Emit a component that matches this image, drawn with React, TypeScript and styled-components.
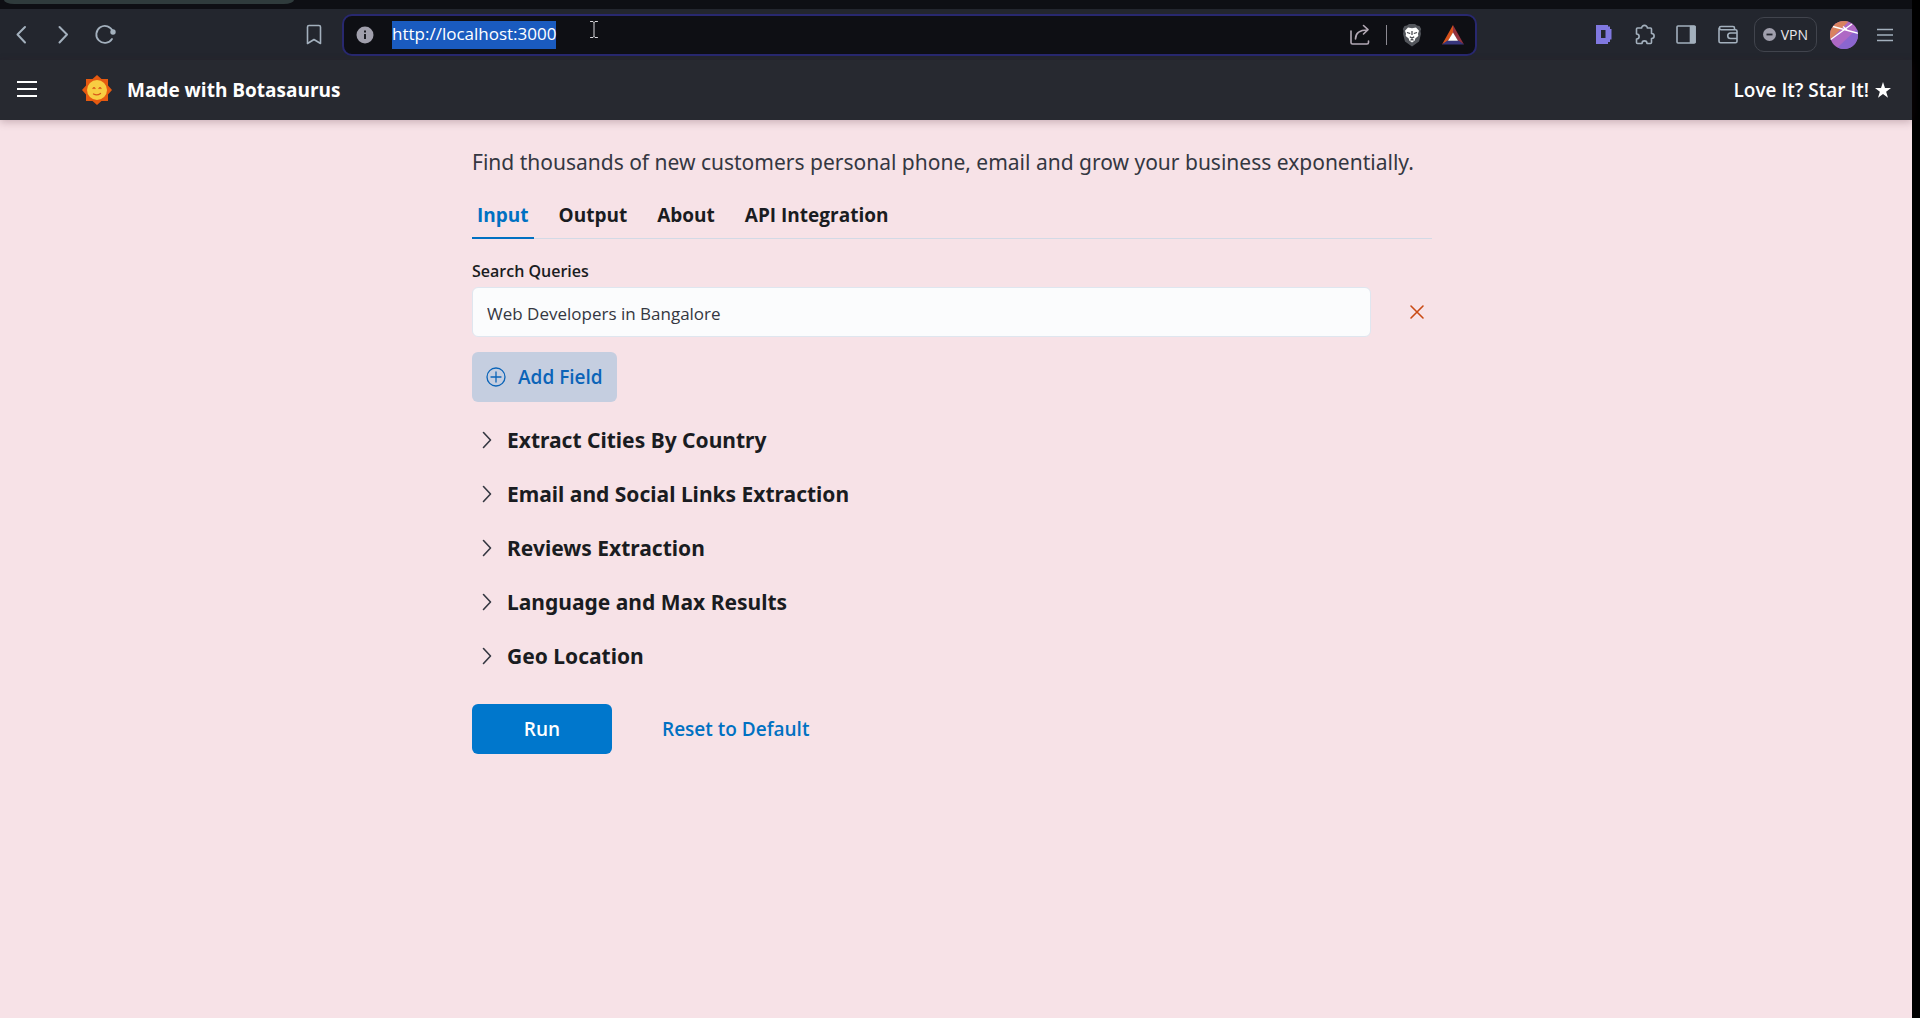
import React, { useState } from "react";
import styled, { createGlobalStyle } from "styled-components";

const uiFont = '"Open Sans", "Noto Sans", sans-serif';
const displayFont = '"Noto Sans", "Open Sans", sans-serif';

const GlobalStyle = createGlobalStyle`
  * { box-sizing: border-box; }
  body { margin: 0; background: #000; font-family: ${uiFont}; }
  button, input { font-family: inherit; }
  button { border: 0; background: none; padding: 0; margin: 0; cursor: pointer; }
`;

const Window = styled.div`
  display: flex;
  flex-direction: column;
  min-height: 100vh;
  margin-right: 8px;
  background: #f7e2e7;
`;

const TabStrip = styled.div`
  height: 9px;
  padding-left: 4px;
  background: #0e0f14;
`;

const TabEdge = styled.div`
  width: 290px;
  height: 4px;
  border-radius: 0 0 10px 10px / 0 0 4px 4px;
  background: #2f3b3c;
`;

const Toolbar = styled.div`
  display: flex;
  align-items: center;
  height: 51px;
  padding: 0 13px 0 8px;
  background: #23262e;
  color: #a3b0bd;
`;

const NavGroup = styled.div`
  display: flex;
  align-items: center;
  gap: 14px;
  flex: 0 1 292px;
`;

const IconButton = styled.button`
  display: flex;
  flex: none;
  align-items: center;
  justify-content: center;
  width: 28px;
  height: 28px;
  color: inherit;
`;

const AddressBar = styled.form`
  display: flex;
  align-items: center;
  flex: 0 1 1135px;
  height: 42px;
  margin-left: 14px;
  padding: 0 8px 0 12px;
  gap: 12px;
  border: 2px solid #28286f;
  border-radius: 10px;
  background: #0e0f14;
  color: #b3a9b5;
`;

const Address = styled.div`
  display: flex;
  flex: 1;
  align-items: center;
  padding-left: 6px;
`;

const SelectedUrl = styled.span`
  height: 28px;
  line-height: 26px;
  font-size: 17px;
  color: #fff;
  background: #1a5bbf;
`;

const CursorMark = styled.svg`
  margin: 0 0 10px 34px;
`;

const Divider = styled.span`
  width: 1px;
  height: 20px;
  background: #8c8a92;
`;

const ToolGroup = styled.div`
  display: flex;
  flex: 1;
  align-items: center;
  justify-content: flex-end;
  gap: 13px;
`;

const VpnButton = styled.button`
  display: flex;
  align-items: center;
  gap: 5px;
  height: 35px;
  padding: 0 8px;
  border: 1px solid #41444d;
  border-radius: 10px;
  color: #e8e6ec;
  font-size: 14px;
`;

const Header = styled.header`
  display: flex;
  align-items: center;
  height: 60px;
  padding: 0 21px 0 13px;
  background: #272930;
  box-shadow: 0 2px 8px rgba(60, 20, 30, 0.25);
  color: #fff;
`;

const Brand = styled.a`
  display: flex;
  align-items: center;
  gap: 15px;
  margin: 0 auto 0 41px;
  color: inherit;
  text-decoration: none;
  font-size: 19px;
  font-weight: 700;
`;

const StarLink = styled.a`
  display: flex;
  align-items: center;
  gap: 6px;
  color: inherit;
  text-decoration: none;
  font-size: 19px;
  font-weight: 600;
`;

const Main = styled.main`
  width: 100%;
  max-width: 968px;
  margin: 0 auto;
  padding: 26px 8px 0 0;
`;

const Lead = styled.p`
  margin: 0;
  font-family: ${displayFont};
  font-size: 21px;
  line-height: 33px;
  color: #343741;
`;

const Tabs = styled.div`
  display: flex;
  gap: 20px;
  height: 60px;
  margin-bottom: 20px;
  box-shadow: inset 0 -1px 0 #d3dae6;
`;

const Tab = styled.button<{ $active: boolean }>`
  padding: 12px 5px 0;
  font-size: 19px;
  font-weight: 700;
  color: ${(p) => (p.$active ? "#0071c2" : "#1a1c21")};
  box-shadow: ${(p) => (p.$active ? "inset 0 -2px 0 #0071c2" : "none")};
`;

const FieldLabel = styled.label`
  display: block;
  margin-bottom: 4px;
  font-size: 16px;
  line-height: 24px;
  font-weight: 600;
  color: #1a1c21;
`;

const FieldRow = styled.div`
  display: flex;
  align-items: center;
  gap: 32px;
  padding-right: 1px;
`;

const TextField = styled.input`
  flex: 1;
  height: 50px;
  padding: 2px 14px 0;
  border: 1px solid #dfe6ef;
  border-radius: 6px;
  background: #fbfcfd;
  font-size: 17px;
  color: #343741;
  outline: none;
`;

const Button = styled.button<{ $kind: "soft" | "solid" | "plain" }>`
  display: flex;
  align-items: center;
  justify-content: center;
  gap: 12px;
  height: 50px;
  padding: 0 14px;
  border-radius: 6px;
  font-size: 19px;
  font-weight: 600;
  min-width: ${(p) => (p.$kind === "solid" ? "140px" : "0")};
  color: ${(p) => (p.$kind === "solid" ? "#fff" : p.$kind === "soft" ? "#0b64b8" : "#0071c2")};
  background: ${(p) => (p.$kind === "solid" ? "#0077cc" : p.$kind === "soft" ? "#c5cee0" : "none")};
`;

const AddRow = styled.div`
  display: flex;
  margin: 15px 0 11px;
`;

const Section = styled.button`
  display: flex;
  align-items: center;
  gap: 11px;
  width: 100%;
  height: 54px;
  padding-left: 6px;
  color: #343741;
`;

const SectionTitle = styled.span`
  font-family: ${displayFont};
  font-size: 21px;
  font-weight: 700;
  color: #1a1c21;
`;

const Actions = styled.div`
  display: flex;
  gap: 36px;
  margin-top: 21px;
`;

const stroke = { fill: "none", stroke: "currentColor", strokeLinecap: "round", strokeLinejoin: "round" } as const;

const sections = [
  "Extract Cities By Country",
  "Email and Social Links Extraction",
  "Reviews Extraction",
  "Language and Max Results",
  "Geo Location",
];

const tabs = ["Input", "Output", "About", "API Integration"];

function LionIcon() {
  return (
    <svg width="28" height="28" viewBox="1 0 28 28">
      <path d="M9 4.500 11 3h6l2 1.500 2.500.5 1.700 3-.7 2 .5 3-2 7.500L14 25.500 7 20.500 5 13l.5-3-.7-2L6.500 5Z" fill="#53565c" />
      <path d="M10 6.500 14 7.200l4-.7 3 3.200-1 3 .3 2.300-3 2.500-.5 2L14 21.500l-2.800-2-.5-2-3-2.500.3-2.300-1-3Z" fill="#fff" />
      <path d="m9 11.500 3.200 1M19 11.500l-3.200 1M14 10v4M11.800 15.800 14 17l2.200-1.200M12.500 19.200 14 18.500l1.500.7" fill="none" stroke="#3e4046" strokeWidth="1.200" />
    </svg>
  );
}

function TriangleIcon() {
  return (
    <svg width="28" height="28" viewBox="0 0 28 28">
      <path d="M14 4v8L9 20l-6 3.500Z" fill="#d6521c" />
      <path d="M14 4v8l5 8 6 3.500Z" fill="#93323f" />
      <path d="m3 23.500 5.500-4h11l5.500 4Z" fill="#38367c" />
      <path d="m14 11.500 5 8.200H9Z" fill="#fff" />
    </svg>
  );
}

function SunIcon() {
  return (
    <svg width="30" height="30" viewBox="0 0 30 30">
      <path d="M4 4h6.500L15 0l4.500 4H26v6.500l4 4.500-4 4.500V26h-6.500L15 30l-4.500-4H4v-6.500L0 15l4-4.500Z" fill="#e65a10" />
      <circle cx="15" cy="15" r="10" fill="#f8cd42" />
      <path d="M11.500 19q3.500 2 7-.5M11 13.500q1-1.500 2 0M17 13.500q1-1.500 2 0" fill="none" stroke="#d9571a" strokeWidth="1.300" strokeLinecap="round" />
    </svg>
  );
}

function AvatarIcon() {
  return (
    <svg width="28" height="28" viewBox="0 0 28 28">
      <defs>
        <clipPath id="avatar-round"><circle cx="14" cy="14" r="14" /></clipPath>
      </defs>
      <g clipPath="url(#avatar-round)">
        <path d="M0 0h28v28H0Z" fill="#ae68c4" />
        <path d="M0 0h19L0 19Z" fill="#d9825f" />
        <path d="M28 7v21H6Z" fill="#8b66cf" />
        <path d="m3 5.500 26 7M0 19 22 3M17 9l-4-3.500" fill="none" stroke="#fff" strokeWidth="1.400" />
      </g>
    </svg>
  );
}

function BrowserToolbar() {
  return (
    <Toolbar>
      <NavGroup>
        <IconButton aria-label="Back"><svg width="28" height="28" {...stroke} strokeWidth="2"><path d="M17 6 9.500 13.500l7.500 8" /></svg></IconButton>
        <IconButton aria-label="Forward"><svg width="28" height="28" {...stroke} strokeWidth="2"><path d="m9.500 6 7.500 7.500-7.500 8" /></svg></IconButton>
        <IconButton aria-label="Reload">
          <svg width="28" height="28" {...stroke} strokeWidth="1.800"><path d="M20 18a8.500 8.500 0 1 1 .8-7.500" /><circle cx="21" cy="11" r="1.800" fill="currentColor" /></svg>
        </IconButton>
      </NavGroup>
      <IconButton aria-label="Bookmark">
        <svg width="28" height="28" {...stroke} strokeWidth="1.600"><path d="M7.500 6A1.500 1.500 0 0 1 9 4.500h10A1.500 1.500 0 0 1 20.500 6V22.500L14 18.500 7.500 22.500Z" /></svg>
      </IconButton>
      <AddressBar onSubmit={(e) => e.preventDefault()}>
        <svg width="18" height="18"><circle cx="9" cy="9" r="8.500" fill="#a09fac" /><path d="M9 8v5M9 4.500v2" stroke="#0e0f14" strokeWidth="1.800" /></svg>
        <Address>
          <SelectedUrl>http://localhost:3000</SelectedUrl>
          <CursorMark width="8" height="17" {...stroke} stroke="#d8d8dc" strokeWidth="1"><path d="M.5.5h2.500l1 1 1-1h2.500M4 1.500v14M.500 16.500H3l1-1 1 1h2.500" /></CursorMark>
        </Address>
        <IconButton type="button" aria-label="Share">
          <svg width="28" height="28" {...stroke} strokeWidth="1.600"><path d="M5 10v11.500a1.500 1.500 0 0 0 1.500 1.500H21a1.500 1.500 0 0 0 1.500-1.500V20M9.500 18c0-6 4-9 12-9M17.500 4.500 22 8.700l-4.500 4.300" /></svg>
        </IconButton>
        <Divider />
        <IconButton type="button" aria-label="Shields"><LionIcon /></IconButton>
        <IconButton type="button" aria-label="Rewards"><TriangleIcon /></IconButton>
      </AddressBar>
      <ToolGroup>
        <IconButton aria-label="Extension">
          <svg width="28" height="28"><path fillRule="evenodd" d="M6 4h12v1.500h2V8h1.500v10.500H20V21h-2v2H6Zm5 5v8h4.500v-8Z" fill="#8078e0" /></svg>
        </IconButton>
        <IconButton aria-label="Extensions">
          <svg width="28" height="28" {...stroke} strokeWidth="1.600"><path d="M6.500 7h4.200C10.500 3.500 16.500 3.500 16.300 7h3.200a1 1 0 0 1 1 1v4.500c3.500 0 3.500 5 0 5V21.500a1 1 0 0 1-1 1h-3.500c0-3.500-5-3.500-5 0H6.500a1 1 0 0 1-1-1v-3.500c3.500 0 3.500-5 0-5V8a1 1 0 0 1 1-1Z" /></svg>
        </IconButton>
        <IconButton aria-label="Side panel">
          <svg width="28" height="28" {...stroke} strokeWidth="1.600"><rect x="5" y="5" width="18" height="17" rx="1" /><path d="M18.500 5.500H23v16h-4.500Z" fill="currentColor" /></svg>
        </IconButton>
        <IconButton aria-label="Wallet">
          <svg width="28" height="28" {...stroke} strokeWidth="1.600"><path d="M21.500 8.500V7A1.500 1.500 0 0 0 20 5.500H8a1.600 1.600 0 0 0 0 3.200h14.500A1.500 1.500 0 0 1 24 10.200v10a1.500 1.500 0 0 1-1.500 1.500h-15A1.500 1.500 0 0 1 6 20.200V7.300M24 12h-6.500a2.500 2.500 0 0 0 0 5.500H24Z" /></svg>
        </IconButton>
        <VpnButton>
          <svg width="13" height="13"><circle cx="6.500" cy="6.500" r="6.500" fill="#a09fac" /><path d="M3.500 6.500h6" stroke="#23262e" strokeWidth="1.800" /></svg>
          VPN
        </VpnButton>
        <IconButton aria-label="Profile"><AvatarIcon /></IconButton>
        <IconButton aria-label="Browser menu">
          <svg width="28" height="28" stroke="currentColor" strokeWidth="1.600"><path d="M6 8.500h16M6 14h16M6 19.500h16" /></svg>
        </IconButton>
      </ToolGroup>
    </Toolbar>
  );
}

export default function App() {
  const [active, setActive] = useState("Input");
  const [query, setQuery] = useState("Web Developers in Bangalore");
  return (
    <>
      <GlobalStyle />
      <Window>
        <TabStrip><TabEdge /></TabStrip>
        <BrowserToolbar />
        <Header>
          <IconButton aria-label="Menu"><svg width="28" height="28" stroke="#fff" strokeWidth="2"><path d="M4 6h20M4 13h20M4 20h20" /></svg></IconButton>
          <Brand href="#"><SunIcon />Made with Botasaurus</Brand>
          <StarLink href="#">
            Love It? Star It!
            <svg width="16" height="16" viewBox="0 0 24 24" fill="#fff"><path d="m12 0 3 9h9l-7.300 5.500 2.800 9L12 18l-7.500 5.500 2.800-9L0 9h9z" /></svg>
          </StarLink>
        </Header>
        <Main>
          <Lead>Find thousands of new customers personal phone, email and grow your business exponentially.</Lead>
          <Tabs role="tablist">
            {tabs.map((t) => (
              <Tab key={t} role="tab" aria-selected={t === active} $active={t === active} onClick={() => setActive(t)}>{t}</Tab>
            ))}
          </Tabs>
          <FieldLabel htmlFor="query">Search Queries</FieldLabel>
          <FieldRow>
            <TextField id="query" value={query} onChange={(e) => setQuery(e.target.value)} />
            <IconButton aria-label="Remove query">
              <svg width="28" height="28" {...stroke} stroke="#c94a14" strokeWidth="1.600"><path d="m8 8 12 12M20 8 8 20" /></svg>
            </IconButton>
          </FieldRow>
          <AddRow>
            <Button $kind="soft">
              <svg width="20" height="20" {...stroke} strokeWidth="1.300"><circle cx="10" cy="10" r="9" /><path d="M10 5v10M5 10h10" /></svg>
              Add Field
            </Button>
          </AddRow>
          {sections.map((s) => (
            <Section key={s} aria-expanded={false}>
              <svg width="18" height="18" {...stroke} strokeWidth="1.600"><path d="m5.500 1.500 7 7.500-7 7.500" /></svg>
              <SectionTitle>{s}</SectionTitle>
            </Section>
          ))}
          <Actions>
            <Button $kind="solid">Run</Button>
            <Button $kind="plain">Reset to Default</Button>
          </Actions>
        </Main>
      </Window>
    </>
  );
}
